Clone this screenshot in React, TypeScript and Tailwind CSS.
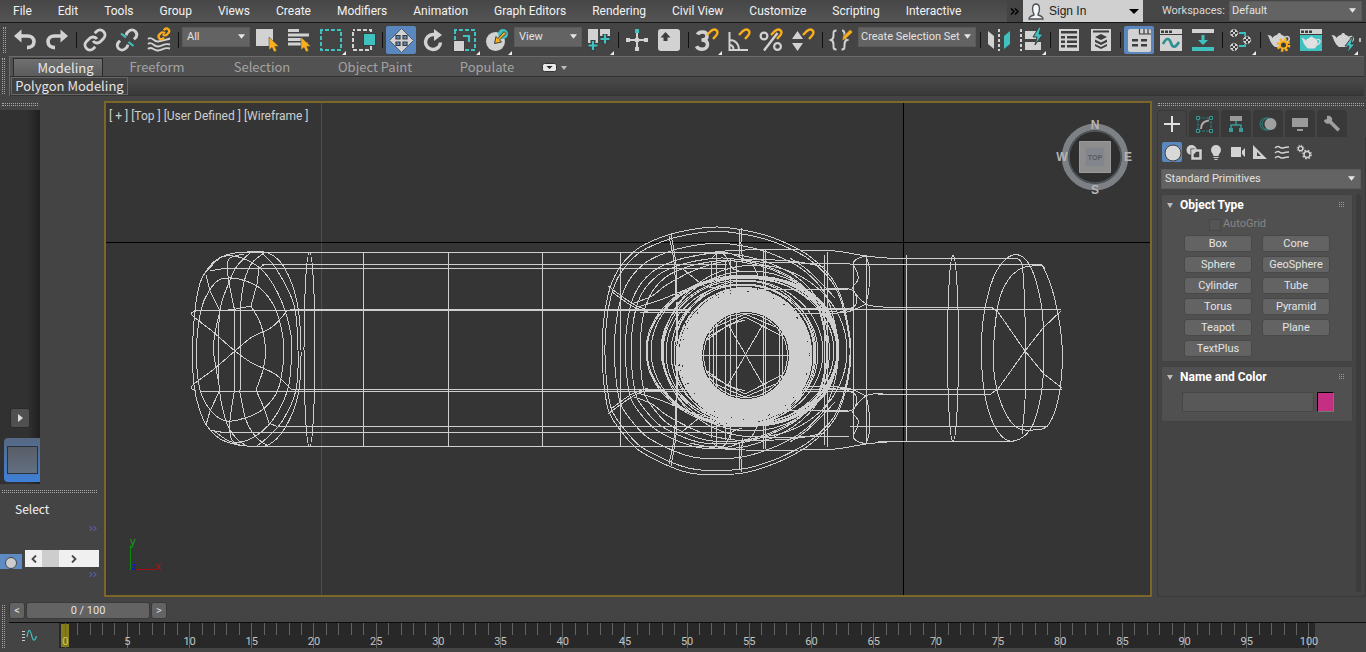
import { type ReactNode } from "react";

const G = "#d2d2d2";
const T = "#3fc1c0";
const O = "#fbaf1c";
const D = "#3c3c3c";

type Pt = [number, number];

function smooth(points: Pt[], closed = false): string {
  const n = points.length;
  const at = (i: number): Pt =>
    closed ? points[(i + n) % n] : points[Math.max(0, Math.min(n - 1, i))];
  let d = `M${points[0][0]} ${points[0][1]}`;
  const last = closed ? n : n - 1;
  for (let i = 0; i < last; i++) {
    const [p0, p1, p2, p3] = [at(i - 1), at(i), at(i + 1), at(i + 2)];
    const c1 = [p1[0] + (p2[0] - p0[0]) / 6, p1[1] + (p2[1] - p0[1]) / 6];
    const c2 = [p2[0] - (p3[0] - p1[0]) / 6, p2[1] - (p3[1] - p1[1]) / 6];
    d += `C${c1[0]} ${c1[1]} ${c2[0]} ${c2[1]} ${p2[0]} ${p2[1]}`;
  }
  return d + (closed ? "Z" : "");
}

/* ---------- toolbar ---------- */

function Tool({
  label,
  active = false,
  flyout = false,
  children,
}: {
  label: string;
  active?: boolean;
  flyout?: boolean;
  children: ReactNode;
}) {
  return (
    <button type="button" aria-label={label} className="flex w-8 shrink-0 justify-center">
      <svg viewBox="0 0 32 30" className="h-[30px] w-8" fill="none">
        {active && <rect x="1" y="1" width="30" height="28" rx="2" fill="#5b87bf" />}
        {children}
        {flyout && <path d="M31 26v4h-4z" fill="#eee" />}
      </svg>
    </button>
  );
}

function Sep() {
  return (
    <div className="flex w-[6px] shrink-0 justify-center">
      <div className="h-4 w-px bg-[#111]" />
    </div>
  );
}

function Combo({
  label,
  value,
  box,
  select,
  id,
}: {
  label: string;
  value: string;
  box: string;
  select: string;
  id?: string;
}) {
  return (
    <div className={"relative " + box}>
      <select
        id={id}
        aria-label={label}
        className={
          "block w-full appearance-none overflow-hidden text-clip whitespace-nowrap border border-[#5a5a5a] bg-[#636363] text-[11px] text-[#e2e2e2] outline-none " +
          select
        }
      >
        <option>{value}</option>
      </select>
      <svg viewBox="0 0 8 5" className="pointer-events-none absolute right-[6px] top-1/2 -mt-[3px] h-[5px] w-[7px]">
        <path d="M0 0h8L4 5z" fill="#e6e6e6" />
      </svg>
    </div>
  );
}

const magnet = <path d="M16 10 20 6C24 2.500 28.500 6 25.500 10L22 14" stroke={O} strokeWidth="2.400" />;
const cursor = <path d="M18 12v13l3-2.500 2 4.500 2.800-1.200-2-4.300H28z" fill={O} stroke={D} strokeWidth=".5" />;
const chainPath =
  "M10 13a5 5 0 0 0 7.54.54l3-3a5 5 0 0 0-7.070-7.070l-1.720 1.710M14 11a5 5 0 0 0-7.540-.540l-3 3a5 5 0 0 0 7.070 7.070l1.710-1.710";

function Teapot({ color = G }: { color?: string }) {
  return (
    <g>
      <path
        d="M4.500 10c3 0 4 1 5 3 .8-1.500 2-2.500 4-3l1-.5c0-2 3.500-2 3.500 0l1 .5c3 1 4.500 3 4.500 5.500 0 3-2 5-3.500 6.500h-8C10 20.500 8 18 7 15.500c-.7-2-1-3.500-2.500-5.500z"
        fill={color}
      />
      <path d="M22 12c5-2 6 3 1 6" stroke={color} strokeWidth="1.500" />
    </g>
  );
}

function WindowFrame({ body = G }: { body?: string }) {
  return (
    <g>
      <path d="M5 4h22v22H5z" fill={body} />
      <path d="M5 4h22v5H5z" fill={G} />
      <path d="M6 5.500h3v2.500H6zM10 5.500h3v2.500h-3zM14 5.500h3v2.500h-3zM5 9h22v1H5z" fill={D} />
    </g>
  );
}

function Checker({ x, y }: { x: number; y: number }) {
  return (
    <g>
      <circle cx={x} cy={y} r="3.700" fill={D} stroke={G} strokeWidth="1" strokeDasharray="1.900 1" />
      <path
        d={`M${x - 1} ${y - 1}h2v2h-2zM${x - 3} ${y - 3}h2v2h-2zM${x + 1} ${y - 3}h2v2h-2zM${x - 3} ${y + 1}h2v2h-2zM${x + 1} ${y + 1}h2v2h-2z`}
        fill={G}
      />
    </g>
  );
}

function Toolbar() {
  return (
    <div className="flex h-[33px] items-center overflow-hidden bg-[#444]">
      <div className="ml-[3px] mr-[3px] h-[26px] w-[3px] shrink-0 border-x border-dotted border-[#a4a4a4]" />
      <Tool label="Undo">
        <path d="M11 11h7.500c4 0 6.500 2.500 6.500 5.800s-2.500 5.800-7 5.800" stroke={G} strokeWidth="3.600" />
        <path d="M5 11l7.500-6.500v13z" fill={G} />
      </Tool>
      <Tool label="Redo">
        <path d="M21 11h-7.500C9.500 11 7 13.500 7 16.800s2.500 5.800 7 5.800" stroke={G} strokeWidth="3.600" />
        <path d="M27 11l-7.500-6.500v13z" fill={G} />
      </Tool>
      <Sep />
      <Tool label="Select and Link">
        <path d={chainPath} transform="translate(4 3)" stroke={G} strokeWidth="2.900" />
      </Tool>
      <Tool label="Unlink Selection">
        <g transform="translate(4 3)" stroke={G} strokeWidth="2.900">
          <path d="m18.840 11.250 1.720-1.500a5 5 0 0 0-.1-6.300 5 5 0 0 0-6.990 0l-1.720 1.710-.6 2.300" />
          <path d="m5.170 12.750-1.710 1.500a5 5 0 0 0 .1 6.300 5 5 0 0 0 6.970 0l1.710-1.710.6-2.300" />
        </g>
        <path d="M10 8.500l5 4M17.500 17l5 4" stroke={T} strokeWidth="2.200" />
      </Tool>
      <Tool label="Bind to Space Warp">
        <path
          d="M5 14c4-3.500 5.500 3 10 2.500s5-1 12-3M5 19c4-3.500 5.500 3 10 2.500s6-3.500 12-2M5 24c4-3.500 5.500 2 10 1.500s6-3.500 12-2"
          stroke={G}
          strokeWidth="1.900"
        />
        <path d={chainPath} transform="translate(14.500 2.500) scale(.53)" stroke={O} strokeWidth="4.200" />
      </Tool>
      <Sep />
      <Combo label="Selection filter" value="All" box="mb-[5px] w-[70px] shrink-0 px-px" select="h-5 pl-1" />
      <Tool label="Select Object">
        <path d="M5 4h17v17H5z" fill={G} />
        {cursor}
      </Tool>
      <Tool label="Select by Name">
        <path d="M5 4h11v3H5zM5 8.500h21v3H5zM5 13h13v3H5zM5 17.500h20v3H5z" fill={G} />
        {cursor}
      </Tool>
      <Tool label="Rectangular Selection Region" flyout>
        <rect x="6" y="5" width="20" height="20" stroke={T} strokeWidth="2" strokeDasharray="4 2" strokeDashoffset="2" />
      </Tool>
      <Tool label="Window Crossing">
        <rect x="6" y="5" width="18" height="20" stroke={G} strokeWidth="2" strokeDasharray="4 2" strokeDashoffset="2" />
        <path d="M16 8h13v13H16z" fill={D} />
        <path d="M17 9h11v11H17z" fill={T} />
      </Tool>
      <Sep />
      <Tool label="Select and Move" active>
        <path d="M16.500 3.500 28.500 15.500 16.500 27.500 4.500 15.500z" fill={G} stroke="#4a5a70" />
        <path
          d="M11 10.500h4v3.500h-4zM18 10.500h4v3.500h-4zM11 17h4v3.500h-4zM18 17h4v3.500h-4z"
          fill="#5b87bf"
          stroke={D}
          strokeWidth="1.200"
        />
      </Tool>
      <Tool label="Select and Rotate">
        <path d="M18 9.500h-2a7.500 7.500 0 1 0 7.500 8" stroke={G} strokeWidth="3.500" />
        <path d="M17 4l8 6-8 6z" fill={G} />
      </Tool>
      <Tool label="Select and Scale" flyout>
        <rect x="6" y="5" width="20" height="20" stroke={T} strokeWidth="2" strokeDasharray="4 2" strokeDashoffset="2" />
        <path d="M4 15h12v12H4z" fill={D} />
        <path d="M5 16h10v10H5z" fill={G} />
        <path d="M14 11h6v6" stroke={T} strokeWidth="2.200" />
      </Tool>
      <Tool label="Select and Place" flyout>
        <circle cx="14.500" cy="16.500" r="9.500" fill={G} />
        <circle cx="22" cy="9" r="5" fill={T} />
        <path d="M23 6.500l2 2-6.500 6.500 2 2-7 1.500 1.500-7 2 2z" fill={O} stroke={D} />
      </Tool>
      <Combo label="Reference coordinate system" value="View" box="mb-[5px] w-[70px] shrink-0 px-px" select="h-5 pl-1" />
      <Tool label="Use Pivot Point Center" flyout>
        <path d="M5 4h10v18H5zM17 4h10v12H17z" fill={G} />
        <path d="M10 15v11M5 20.500h10M22 9v10M17 13.500h10" stroke={D} strokeWidth="5" />
        <path d="M10 16v9M5.500 20.500h9M22 9.500v9M17.500 14h9" stroke={T} strokeWidth="2.200" />
      </Tool>
      <Sep />
      <Tool label="Select and Manipulate">
        <path d="M16 8v17M6 15h20" stroke={G} strokeWidth="2" />
        <path d="M5 13h4v4H5zM23 13h4v4h-4zM14 22h4v4h-4zM14 13h4v4h-4z" fill={G} />
        <path d="M14 4h4v4h-4z" fill={T} />
      </Tool>
      <Tool label="Keyboard Shortcut Override">
        <rect x="5" y="4" width="22" height="22" rx="3" fill={G} />
        <path d="M12.500 7l5 5.500h-3V16h-4v-3.500h-3z" fill={D} />
      </Tool>
      <Sep />
      <Tool label="Snaps Toggle" flyout>
        <path
          d="M6.500 9.500c1-2 3-2.500 5-2.500 3 0 4.500 1.700 4.500 4 0 2.500-2 4-5.500 4 4 0 6 1.700 6 4.500 0 3-2.300 4.700-5.500 4.700-2.500 0-4.500-1-5.500-3"
          stroke={G}
          strokeWidth="3.600"
        />
        {magnet}
      </Tool>
      <Tool label="Angle Snap Toggle">
        <path d="M6.500 7v18H25M6.500 15c6 0 9.500 4 9.500 9.500M6.500 20c2.500 0 4 2 4 4.500" stroke={G} strokeWidth="2" />
        {magnet}
      </Tool>
      <Tool label="Percent Snap Toggle">
        <circle cx="9" cy="11" r="3.400" stroke={G} strokeWidth="2.200" />
        <circle cx="22.500" cy="21.500" r="3.400" stroke={G} strokeWidth="2.200" />
        <path d="M22.500 8 9 25.500" stroke={G} strokeWidth="2.400" />
        {magnet}
      </Tool>
      <Tool label="Spinner Snap Toggle">
        <path d="M5 14l5.500-8 5.500 8zM5 18l5.500 8 5.500-8z" fill={G} />
        {magnet}
      </Tool>
      <Sep />
      <Tool label="Edit Named Selection Sets">
        <path
          d="M11.500 5.500c-3 0-3 1-3 4s0 4.500-2.500 5.500c2.500 1 2.500 2.500 2.500 5.500s0 4 3 4M17 5.500c2 0 2.500 1 2.500 4s0 4.500 2.500 5.500c-2.500 1-2.500 2.500-2.500 5.500s0 4-3 4"
          stroke={G}
          strokeWidth="2"
        />
        <path d="M17 16l1-4.500L25 4.500l3 2.500-7.500 7z" fill={O} stroke={D} strokeWidth=".6" />
      </Tool>
      <Combo
        label="Named selection sets"
        value="Create Selection Set"
        box="mb-[5px] w-[120px] shrink-0 px-px"
        select="h-5 pl-[2px]"
      />
      <Sep />
      <Tool label="Mirror">
        <path d="M5 6l6 5v13l-6-5z" fill={G} />
        <path d="M27 6l-6 5v13l6-5z" fill={T} />
        <path d="M16 4v22" stroke={G} strokeWidth="2" strokeDasharray="3 2" />
      </Tool>
      <Tool label="Align" flyout>
        <path d="M6 4v22" stroke={G} strokeWidth="2" strokeDasharray="3 2" />
        <path d="M10 6h14v8H10zM10 17h16v8H10z" fill={G} />
        <path d="M24 2l-6 10h4l-2 8 8-11h-4l2-7z" fill={T} stroke={D} />
      </Tool>
      <Sep />
      <Tool label="Toggle Scene Explorer">
        <path d="M6 4h20v22H6z" fill={G} />
        <path
          d="M8 6h16v2.500H8zM8 11h4v2.500H8zM14 11h10v2.500H14zM8 15.500h4V18H8zM14 15.500h10V18H14zM8 20h4v2.500H8zM14 20h10v2.500H14z"
          fill={D}
        />
      </Tool>
      <Tool label="Toggle Layer Explorer">
        <path d="M6 4h20v22H6z" fill={G} />
        <path d="M8 5.500h16v2H8z" fill={D} />
        <path
          d="M16 9l6 3-6 3-6-3zM10 14.500l6 3 6-3v2.500l-6 3-6-3zM10 19l6 3 6-3v2l-6 3-6-3z"
          fill={D}
        />
      </Tool>
      <Sep />
      <Tool label="Toggle Ribbon" active>
        <rect x="5" y="4" width="23" height="23" rx="2" fill={G} />
        <path d="M16.500 4v5H28M21 4v5M25 4v5" stroke={D} strokeWidth="1.200" />
        <path d="M9 14h6v2.500H9zM18 14h6v2.500h-6zM9 19h6v2.500H9zM18 19h6v2.500h-6z" fill={D} />
      </Tool>
      <Tool label="Curve Editor">
        <WindowFrame />
        <path d="M8 19c3-6 6-7 8-1s5 4 8-1" stroke="#2b8f92" strokeWidth="2.600" />
      </Tool>
      <Tool label="Schematic View">
        <path d="M5 4h22v4H5z" fill={G} />
        <path d="M5 22h22v4H5zM14.500 10h3v5H21l-5 5-5-5h3.500z" fill={T} />
      </Tool>
      <Sep />
      <Tool label="Material Editor" flyout>
        <path d="M14 8h6v3M14 21h6v-2" stroke={T} strokeWidth="1.800" />
        <Checker x={9} y={8} />
        <Checker x={9} y={22} />
        <Checker x={22} y={15} />
      </Tool>
      <Sep />
      <Tool label="Render Setup">
        <Teapot />
        <circle cx="20.500" cy="20" r="5.500" stroke={O} strokeWidth="2.800" strokeDasharray="2.300 2" />
        <circle cx="20.500" cy="20" r="3.500" fill={D} stroke={O} strokeWidth="2" />
      </Tool>
      <Tool label="Rendered Frame Window">
        <WindowFrame body={T} />
        <g transform="translate(2.500 4.500) scale(.86)">
          <Teapot color="#e0e0e0" />
        </g>
      </Tool>
      <Tool label="Render Production" flyout>
        <Teapot />
        <path d="M25 12l-7 9h4l-2 7 8-9h-4l2-7z" fill={T} stroke={D} />
      </Tool>
      <span className="h-1 w-[2px] bg-[#bbb]" />
    </div>
  );
}

/* ---------- menu bar and ribbon ---------- */

const menus = [
  "File", "Edit", "Tools", "Group", "Views", "Create", "Modifiers", "Animation",
  "Graph Editors", "Rendering", "Civil View", "Customize", "Scripting", "Interactive",
];

function MenuBar() {
  return (
    <header className="flex h-[23px] items-stretch border-b border-[#161616] bg-linear-to-b from-[#464646] to-[#545454]">
      <nav className="flex flex-1 items-center gap-[26px] pl-[13px] text-[12px] text-[#f2f2f2]">
        {menus.map((m) => (
          <button key={m} type="button" className="whitespace-nowrap">
            {m}
          </button>
        ))}
      </nav>
      <div className="flex w-4 shrink-0 items-center justify-center bg-[#444] pr-[2px]">
        <svg viewBox="0 0 9 7" className="h-[7px] w-[9px]" fill="none" stroke="#000" strokeWidth="1.500">
          <path d="M1 .5l3 3-3 3M5 .5l3 3-3 3" />
        </svg>
      </div>
      <button
        type="button"
        className="flex w-[120px] shrink-0 items-center bg-[#d0d0d0] pl-[5px] font-['Liberation_Sans',sans-serif] text-[12px] text-[#1d1d1d]"
      >
        <svg viewBox="0 0 16 17" className="mr-[5px] h-[17px] w-4">
          <path d="M1 16c0-2.500 2-3.200 5-4 .3-1-.5-1.500-1-3C4 5 4.500 1 8 1s4 4 3 8c-.5 1.500-1.300 2-1 3 3 .8 5 1.500 5 4z" fill="#f4f6f8" stroke="#4b5056" strokeWidth="1.300" />
        </svg>
        Sign In
        <svg viewBox="0 0 10 5" className="ml-auto mr-1 h-[5px] w-[10px]">
          <path d="M0 0h10L5 5z" fill="#000" />
        </svg>
      </button>
      <div className="flex w-[223px] shrink-0 items-center bg-[#474747] pl-[19px]">
        <label htmlFor="workspace" className="w-[67px] whitespace-nowrap text-[11px] text-[#d8d8d8]">
          Workspaces:
        </label>
        <Combo id="workspace" label="Workspaces:" value="Default" box="w-[133px]" select="h-5 pl-[2px]" />
      </div>
    </header>
  );
}

function Ribbon() {
  return (
    <section className="flex bg-[#444] font-['Noto_Sans_CJK_SC','Noto_Sans',sans-serif]">
      <div className="mx-[2px] my-[2px] w-[3px] shrink-0 border-x border-dotted border-[#a4a4a4]" />
      <div className="ml-[2px] mr-[2px] min-w-0 flex-1 border-l border-t border-[#6b6b6b]">
        <div className="flex h-5 items-end border-b border-[#303030] bg-[#525252] pl-[3px] text-[13px] text-[#a3a3a3]">
          <button
            type="button"
            className="h-[18px] w-[90px] border border-b-0 border-[#2a2a2a] bg-linear-to-b from-[#707070] to-[#5c5c5c] pl-[15px] leading-4 text-[#e6e6e6]"
          >
            Modeling
          </button>
          <button type="button" className="w-[108px] leading-[18px]">Freeform</button>
          <button type="button" className="w-[102px] leading-[18px]">Selection</button>
          <button type="button" className="w-[124px] leading-[18px]">Object Paint</button>
          <button type="button" className="w-[100px] leading-[18px]">Populate</button>
          <button type="button" aria-label="Minimize ribbon" className="mb-1 ml-[5px] flex items-center gap-1">
            <svg viewBox="0 0 15 9" className="h-[9px] w-[15px]">
              <rect x=".5" y=".5" width="14" height="8" rx="2" fill="#e8e8e8" stroke="#333" />
              <path d="M4.500 3h6l-3 3z" fill="#222" />
            </svg>
            <svg viewBox="0 0 6 4" className="h-1 w-[6px]">
              <path d="M0 0h6L3 4z" fill="#bbb" />
            </svg>
          </button>
        </div>
        <div className="flex h-[19px] border-b border-[#333] bg-linear-to-b from-[#4b4b4b] to-[#383838] pl-px">
          <button
            type="button"
            className="h-[18px] w-[117px] border border-[#686868] bg-[#404040] text-[13px] leading-4 text-[#e4e4e4]"
          >
            Polygon Modeling
          </button>
        </div>
      </div>
    </section>
  );
}

/* ---------- wireframe drawing ---------- */

const H = (y: number, x1: number, x2: number) => `M${x1} ${y}H${x2}`;
const V = (x: number, y1: number, y2: number) => `M${x} ${y1}V${y2}`;

const straight = [
  H(252.5, 247, 722), H(264.5, 262, 727), H(268.5, 224, 725), H(309.5, 290, 690), H(310.5, 195, 690),
  H(389.5, 291, 690), H(391.5, 200, 690), H(426.5, 278, 735), H(432.5, 220, 730), H(446.5, 250, 722),
  V(363.5, 252, 446), V(448.5, 252, 446), V(542.5, 252, 446), V(620.5, 252, 446),
  H(258.5, 893, 1018), H(264.5, 850, 1040), H(307.5, 883, 992), H(309.5, 800, 1061),
  H(389.5, 800, 1062), H(394.5, 878, 990), H(426.5, 850, 1048), H(441.5, 878, 1014),
  V(853.5, 264, 436), V(866.5, 255, 444), V(906.5, 255, 441),
  V(711.5, 262, 285), V(716.5, 252, 285), V(725.5, 260, 290), V(730.5, 258, 290), V(736.5, 262, 290),
  V(763.5, 249, 288), V(765.5, 249, 288), V(824.5, 255, 445), V(827.5, 252, 447),
  V(711.5, 415, 438), V(716.5, 415, 447), V(725.5, 415, 440), V(730.5, 415, 440),
  V(763.5, 415, 449), V(765.5, 415, 449), H(289.5, 763, 848), H(410.5, 763, 848),
  H(312.5, 640, 690), H(308.5, 770, 854), H(391.5, 770, 854),
].join("");

const outer: Pt[] = [
  [602, 350], [604, 318], [610, 288], [620, 267], [636, 250], [652, 241], [671, 234], [695, 229],
  [718, 227], [743, 230], [768, 236], [790, 245], [808, 255], [825, 270], [837, 287], [846, 315],
  [851, 350], [847, 385], [837, 415], [825, 431], [808, 446], [785, 459], [765, 467], [743, 473],
  [712, 475], [690, 473], [671, 467], [652, 458], [636, 448], [621, 431], [609, 412], [604, 385],
];

function scaled(kx: number, ky: number, dx: number): Pt[] {
  return outer.map(([x, y]) => [726 + dx + (x - 726) * kx, 351 + (y - 351) * ky]);
}

const shellCurves = [
  smooth(outer, true),
  smooth(scaled(0.985, 0.965, 1), true),
  smooth(scaled(0.9, 0.87, 0), true),
  smooth(scaled(0.82, 0.79, 1), true),
  smooth(scaled(0.79, 0.75, 3), true),
  smooth(scaled(0.75, 0.73, 7), true),
];

const leftCap = [
  smooth([
    [192.5, 350], [195, 310], [200, 283], [207, 270], [216, 260], [230, 254], [247, 252], [268, 253],
    [284, 267], [297, 302], [301, 350], [298, 395], [285, 428], [268, 445], [247, 446], [222, 440],
    [207, 426], [199, 408], [194, 385],
  ], true),
  smooth([
    [196.5, 350], [201, 310], [209, 291], [219, 280], [231, 278], [246, 281], [261, 289], [275, 308],
    [283, 338], [283, 365], [277, 392], [262, 410], [245, 418], [227, 421], [212, 412], [200, 390],
  ], true),
  smooth([[207, 271], [222, 257], [242, 258], [264, 272], [281, 300], [291, 335], [291, 365], [287, 392], [272, 421], [252, 438], [232, 442], [214, 431]]),
  smooth([[262, 253], [277, 270], [294, 305], [298, 350], [296, 390], [283, 420], [268, 437], [257, 446]]),
  smooth([[250, 253], [237, 266], [228, 285], [220, 310], [218.5, 350], [219.5, 390], [227, 424], [238, 440], [247, 446]]),
  smooth([[264, 253], [252, 263], [244, 282], [240, 310]]) + "V390" + smooth([[239.5, 390], [246, 420], [256, 437], [268, 446]]),
  smooth([[244, 254], [229, 259], [228, 276], [234.5, 310]]) + "V390" + smooth([[234.5, 390], [230, 420], [231, 438], [240, 446]]),
  "M278 264.500H264L259 269L257 284L251 306L236 309L220 311",
  smooth([[251, 306], [261, 325], [265.5, 350], [263, 370], [256, 390]]),
  "M256 390L264 408L269 423L277 426.500",
  "M206 275L210 291L220 311",
  smooth([[220, 311], [215, 333], [213.5, 350], [216, 368], [220, 390]]),
  "M220 390L210 411L206 425",
  smooth([[196, 311], [192, 315], [212, 331], [235, 351], [252, 363], [275, 374], [291, 389]]),
  smooth([[196, 391], [192, 386], [214, 369], [235, 351], [252, 337], [272, 327], [288, 310]]),
  smooth([[210, 271], [224, 268.5], [232, 268.5]]),
  smooth([[210, 430], [224, 432.5], [232, 432.5]]),
];

const rightCap = [
  smooth([[981.5, 345], [985, 308], [996, 272], [1013, 255], [1029, 264], [1041, 303], [1044, 350], [1041, 395], [1030, 430], [1010, 441], [994, 425], [984, 390]], true),
  smooth([[993.5, 350], [998, 305], [1008, 280], [1022, 268], [1037, 266], [1044, 269], [1055, 300], [1062, 345], [1060, 390], [1049, 424], [1033, 430], [1016, 427], [1003, 408], [995, 380]], true),
  smooth([[1016, 258], [1022, 265], [1024.5, 300], [1025.5, 350], [1025, 400], [1022, 434]]),
  "M992 307.500L998 312L1025 351L1044 374L1062 388",
  "M990 394.500L998 389L1025 351L1043 328L1061 311",
  "M1040 264l4 3v4",
];

const halfDetails = [
  smooth([[690, 257], [715, 252], [745, 250], [800, 250], [835, 251], [866, 256], [893, 258.5]]),
  smooth([[866, 256], [857, 259], [853, 264], [857, 272], [858, 280], [853, 289], [866, 304], [883, 307]]),
  smooth([[866, 257], [869, 266], [869, 288], [866, 304]]),
  smooth([[827, 289], [849, 289], [855, 293], [857, 302], [853, 307], [840, 312], [820, 310]]),
  smooth([[866, 304], [853, 310], [838, 313], [780, 313]]),
  smooth([[722, 252], [732, 254], [744, 259], [760, 262], [800, 263], [850, 264]]),
  smooth([[634, 303], [652, 296], [668, 284], [700, 268], [735, 260], [790, 261], [825, 267]]),
  smooth([[634, 308], [660, 300], [690, 288], [715, 281], [740, 276]]),
  smooth([[608, 286], [630, 302], [645, 309], [665, 310]]),
  smooth([[612, 292], [632, 306], [648, 312]]),
  smooth([[683, 269], [694, 278], [705, 286], [718, 288]]),
  smooth([[712, 258], [720, 252], [727, 258], [732, 268], [742, 272]]),
  smooth([[736, 259], [750, 262], [758, 275]]),
  smooth([[790, 258], [805, 268], [820, 282], [835, 298]]),
  smooth([[671, 234], [676, 265], [677, 300], [677, 350]]),
  smooth([[669, 236], [674, 262], [676, 300], [676, 350]]),
  smooth([[742, 228], [741, 244], [743, 262]]),
  smooth([[740, 230], [739, 246], [740, 258]]),
];

const middleLoops = [
  { cx: 740, cy: 351, rx: 94, ry: 75 }, { cx: 742, cy: 351, rx: 95, ry: 74 },
  { cx: 743, cy: 351, rx: 96, ry: 73 }, { cx: 744, cy: 351, rx: 93, ry: 76 },
  { cx: 750, cy: 350, rx: 89, ry: 73 }, { cx: 755, cy: 351, rx: 92, ry: 86 },
  { cx: 750, cy: 351, rx: 88, ry: 80 }, { cx: 743, cy: 352, rx: 80, ry: 72 },
  { cx: 742, cy: 353, rx: 76, ry: 69 }, { cx: 743, cy: 353, rx: 72, ry: 68 },
  { cx: 744, cy: 354, rx: 70, ry: 70 }, { cx: 745, cy: 353, rx: 71, ry: 72 },
];

const holeLines = [
  V(709.5, 330, 381), V(713.5, 325, 386), V(716.5, 323, 388), V(725.5, 317, 394), V(730.5, 315, 396),
  V(736.5, 313, 398), V(763.5, 315, 396), V(765.5, 316, 395), V(779.5, 327, 383), V(782.5, 332, 379),
  H(355.5, 702, 789), "M729 326l34 59M762 326l-34 59",
  "M709 336L745 317L782 336M713 328L745 314L778 328M707 340L728 325L745 320",
  "M709 375L745 394L782 375M713 383L745 397L778 383M707 371L728 386L745 391",
].join("");

function Wireframe() {
  return (
    <svg
      viewBox="106 103 1044 492"
      preserveAspectRatio="xMidYMid slice"
      className="absolute inset-0 size-full"
      fill="none"
      shapeRendering="crispEdges"
      role="img"
      aria-label="Top wireframe view"
    >
      <path d="M321.500 90V610" stroke="#4d4d4d" />
      <path d="M0 242.500H1400M903.500 90V610" stroke="#000" />
      <g stroke="#cfcfcf" strokeWidth="1">
        <path d={straight} />
        <ellipse cx="309.500" cy="349.500" rx="5.500" ry="97" />
        <ellipse cx="953" cy="348.500" rx="5.500" ry="93" />
        {[...shellCurves, ...leftCap, ...rightCap].map((d, i) => (
          <path key={i} d={d} />
        ))}
        {halfDetails.map((d, i) => (
          <path key={i} d={d} />
        ))}
        <g transform="translate(0 700) scale(1 -1)">
          {halfDetails.map((d, i) => (
            <path key={i} d={d} />
          ))}
        </g>
        {middleLoops.map((e, i) => (
          <ellipse key={i} {...e} />
        ))}
        <path d={smooth([[745, 277], [775, 279], [805, 290], [828, 312], [838, 350], [828, 388], [805, 411], [775, 423], [745, 425]])} strokeWidth="3" />
        <circle cx="745.500" cy="355.500" r="43.500" fill="#353535" stroke="none" />
        <path d={holeLines} />
        <circle cx="745.500" cy="355.500" r="42" />
        <circle cx="745.500" cy="355.500" r="55" strokeWidth="23" />
        <circle cx="744.500" cy="355" r="67" strokeWidth="2" strokeDasharray="27 1 42 1 14 1" />
      </g>
      <circle cx="745.500" cy="355.500" r="64" stroke="#353535" strokeDasharray="1 17 2 25 1 11" />
      <path d="M130.500 545v25" stroke="#0a8a0a" />
      <path d="M135 569.500h22" stroke="#a40d0d" />
      <g fontFamily="Noto Sans, sans-serif" fontSize="11" stroke="none">
        <text x="130" y="545" fill="#1c9a1c">y</text>
        <text x="155" y="570" fill="#b01010">x</text>
        <text x="131" y="570" fill="#1414d8">z</text>
      </g>
    </svg>
  );
}

function ViewCube() {
  return (
    <svg viewBox="0 0 80 80" className="absolute right-[15px] top-[14px] size-20" role="img" aria-label="View cube">
      <circle cx="40" cy="40" r="30" fill="#2e2e2e" stroke="#7d8186" strokeWidth="6.500" />
      <circle cx="40" cy="40" r="26" fill="none" stroke="#50555a" strokeWidth="1.500" />
      <path d="M24.500 24.500h31v31h-31z" fill="#8d8d8d" stroke="#9a9a9a" />
      <path d="M30.500 30.500h19v19h-19z" fill="#82868c" />
      <g fontFamily="Liberation Sans, sans-serif" textAnchor="middle" fontWeight="bold">
        <text x="40" y="43" fontSize="7" fill="#55595f">TOP</text>
        <g fontSize="12" fill="#b4b4b4">
          <text x="40" y="12">N</text>
          <text x="40" y="77">S</text>
          <text x="7" y="44">W</text>
          <text x="73" y="44">E</text>
        </g>
      </g>
    </svg>
  );
}

/* ---------- side panels ---------- */

function Grip({ className }: { className: string }) {
  return (
    <div className={"h-[3px] border-y border-dotted border-[#a8a8a8] " + className} />
  );
}

function LeftPanel() {
  return (
    <aside className="flex w-[104px] shrink-0 flex-col">
      <Grip className="ml-[2px] mt-[7px] w-9 shrink-0" />
      <div className="mt-1 flex w-10 flex-1 flex-col justify-end bg-linear-to-r from-[#313131] from-70% to-[#1f1f1f]">
        <button
          type="button"
          aria-label="Play"
          className="mb-[10px] ml-[10px] flex size-5 items-center justify-center rounded-[3px] border border-[#2a2a2a] bg-[#505050]"
        >
          <svg viewBox="0 0 5 8" className="h-2 w-[5px]">
            <path d="M0 0l5 4-5 4z" fill="#ddd" />
          </svg>
        </button>
        <button
          type="button"
          aria-label="Viewport layout"
          className="mb-[2px] ml-1 flex h-11 items-center rounded-l-[4px] bg-linear-to-b from-[#566781] to-[#3d80d8] pl-[3px]"
        >
          <span className="h-7 w-[31px] border border-[#2b3138] bg-linear-to-b from-[#585d66] to-[#627082]" />
        </button>
      </div>
      <Grip className="ml-[2px] mt-[6px] w-[95px] shrink-0" />
      <div className="mt-[7px] pl-[15px] font-['Noto_Sans_CJK_SC','Noto_Sans',sans-serif] text-[12px] leading-[18px] text-[#f4f4f4]">Select</div>
      <Chevrons className="mt-2" />
      <div className="mt-[19px] flex h-[19px] items-end">
        <button type="button" aria-label="Object selection" className="flex h-[15px] w-[22px] items-end justify-center overflow-hidden bg-[#5f8bc4]">
          <span className="size-3 rounded-full border border-[#444] bg-[#ccc]" />
        </button>
        <div className="ml-[3px] flex h-[17px] w-[74px] items-stretch self-start bg-[#f0f0f0]">
          <button type="button" aria-label="Scroll left" className="flex w-[17px] items-center justify-center">
            <svg viewBox="0 0 6 8" className="h-2 w-[6px]" fill="none" stroke="#444" strokeWidth="1.800"><path d="M5 0.500L1.500 4 5 7.500" /></svg>
          </button>
          <span className="w-[17px] bg-[#cdcdcd]" />
          <button type="button" aria-label="Scroll right" className="flex w-[29px] items-center justify-center">
            <svg viewBox="0 0 6 8" className="h-2 w-[6px]" fill="none" stroke="#444" strokeWidth="1.800"><path d="M1 0.500L4.500 4 1 7.500" /></svg>
          </button>
        </div>
      </div>
      <Chevrons className="mb-6 mt-[3px]" />
    </aside>
  );
}

function Chevrons({ className }: { className: string }) {
  return (
    <button type="button" aria-label="More" className={"ml-[89px] w-2 " + className}>
      <svg viewBox="0 0 8 5" className="h-[5px] w-2" fill="none" stroke="#5658a0" strokeWidth="1.200">
        <path d="M.5 0L3 2.500.5 5M4.500 0L7 2.500 4.500 5" />
      </svg>
    </button>
  );
}

const primitives = [
  "Box", "Cone", "Sphere", "GeoSphere", "Cylinder", "Tube", "Torus", "Pyramid", "Teapot", "Plane", "TextPlus",
];

const tabIcons: { name: string; art: ReactNode }[] = [
  { name: "Create", art: <path d="M10 2v16M2 10h16" stroke="#e0e0e0" strokeWidth="2" /> },
  {
    name: "Modify",
    art: (
      <g>
        <rect x="4" y="4" width="13" height="13" stroke="#2d7a7a" strokeWidth="1.200" strokeDasharray="3 1" />
        <path d="M2.500 2.500h3v3h-3zM15.500 2.500h3v3h-3zM2.500 15.500h3v3h-3zM15.500 15.500h3v3h-3z" fill="#333" stroke="#3a9a98" />
        <path d="M7 15c0-5 3-8 8-8.500" stroke="#aaa" strokeWidth="2" />
      </g>
    ),
  },
  {
    name: "Hierarchy",
    art: (
      <g>
        <path d="M4 2h12v5H4z" fill="#9a9a9a" />
        <path d="M10 7v4M5 16v-5h10v5" stroke="#3a9a98" strokeWidth="1.500" />
        <path d="M3 14h4v4H3zM13 14h4v4h-4z" fill="#3a9a98" />
      </g>
    ),
  },
  {
    name: "Motion",
    art: (
      <g>
        <circle cx="8" cy="10" r="6" stroke="#2f8381" />
        <circle cx="10" cy="10" r="6" stroke="#2f8381" fill="#3a3a3a" />
        <circle cx="12.500" cy="10" r="6" fill="#a0a0a0" />
      </g>
    ),
  },
  { name: "Display", art: <path d="M2 4h16v9H2zM7 15h6v2H7z" fill="#9a9a9a" /> },
  {
    name: "Utilities",
    art: (
      <path d="M2 6l3-1V2c3-.8 6 1.500 5 5l8 8-2.500 2.500-8-8C5 10.500 2 9 2 6z" fill="#a0a0a0" />
    ),
  },
];

const createIcons: { name: string; art: ReactNode }[] = [
  { name: "Geometry", art: <circle cx="11" cy="11" r="8" fill="#d8d8d8" stroke="#404040" /> },
  {
    name: "Shapes",
    art: (
      <g>
        <circle cx="7.500" cy="8" r="5" fill={G} />
        <path d="M8.500 8.500h8v8h-8z" stroke={D} strokeWidth="4" />
        <path d="M8.500 8.500h8v8h-8z" stroke={G} strokeWidth="2.500" />
        <path d="M12 5a5 5 0 0 1-3 7V9z" fill={G} />
      </g>
    ),
  },
  { name: "Lights", art: <path d="M10 3a5 5 0 0 1 5 5c0 2.500-2 3.500-2.500 6h-5C7 11.500 5 10.500 5 8a5 5 0 0 1 5-5zM7.500 15h5v1h-5zM8.500 17h3v1h-3z" fill={G} /> },
  { name: "Cameras", art: <path d="M3 5h10v10H3zM14 9l3-3v9l-3-3z" fill={G} /> },
  { name: "Helpers", art: <path d="M3 3l14 14H3zM7 10v4h4z" fillRule="evenodd" fill={G} /> },
  {
    name: "Space Warps",
    art: <path d="M3 6c4-4 5 1 8 0s4-1 6-1M3 11c4-4 5 1 8 0s4-1 6-1M3 16c4-4 5 1 8 0s4-1 6-1" stroke={G} strokeWidth="1.500" />,
  },
  {
    name: "Systems",
    art: (
      <g stroke={G}>
        <circle cx="6.500" cy="6.500" r="2.200" strokeWidth="1.300" />
        <circle cx="6.500" cy="6.500" r="3.300" strokeWidth="1" strokeDasharray="1.300 1.300" />
        <circle cx="13" cy="12.500" r="3" strokeWidth="1.500" />
        <circle cx="13" cy="12.500" r="4.300" strokeWidth="1.200" strokeDasharray="1.700 1.700" />
      </g>
    ),
  },
];

function Rollout({ title, children }: { title: string; children: ReactNode }) {
  return (
    <section className="rounded-[2px] border border-[#424242] bg-[#505050]">
      <h2 className="flex h-5 items-center pl-[5px] pr-[7px] text-[12px] font-bold text-white">
        <svg viewBox="0 0 6 5" className="mr-[7px] h-[5px] w-[6px]">
          <path d="M0 0h6L3 5z" fill="#bbb" />
        </svg>
        {title}
        <svg viewBox="0 0 6 6" className="ml-auto size-[6px]">
          <path d="M0 0h1v1H0zM2 0h1v1H2zM4 0h1v1H4zM0 2h1v1H0zM2 2h1v1H2zM4 2h1v1H4zM0 4h1v1H0zM2 4h1v1H2zM4 4h1v1H4z" fill="#999" />
        </svg>
      </h2>
      {children}
    </section>
  );
}

function CommandPanel() {
  return (
    <aside className="mb-1 flex w-[214px] shrink-0 flex-col pl-[5px]">
      <Grip className="ml-px mt-[7px] w-[206px] shrink-0" />
      <div className="mt-1 flex h-[27px] shrink-0 gap-[2px]">
        {tabIcons.map((t, i) => (
          <button
            key={t.name}
            type="button"
            aria-label={t.name}
            className={
              "flex w-[30px] items-center justify-center rounded-t-[4px] " +
              (i === 0 ? "border border-b-0 border-[#393939] bg-[#444]" : "bg-[#393939]")
            }
          >
            <svg viewBox="0 0 20 20" className="size-5" fill="none">
              {t.art}
            </svg>
          </button>
        ))}
      </div>
      <div className="flex flex-1 flex-col rounded-b-[3px] border border-t-0 border-[#393939] pl-1 pr-1 pt-[5px]">
        <div className="flex gap-[2px]">
          {createIcons.map((c, i) => (
            <button
              key={c.name}
              type="button"
              aria-label={c.name}
              className={"flex size-5 items-center justify-center rounded-[2px] " + (i === 0 ? "bg-[#5b87bf]" : "")}
            >
              <svg viewBox="0 0 20 20" className="size-5" fill="none">
                {c.art}
              </svg>
            </button>
          ))}
        </div>
        <Combo label="Category" value="Standard Primitives" box="-ml-px mt-[7px]" select="h-5 pl-[3px]" />
        <div className="-ml-px mt-[5px] flex flex-1 gap-[3px]">
          <div className="flex min-w-0 flex-1 flex-col gap-1">
            <Rollout title="Object Type">
              <label className="flex h-[19px] items-center gap-[2px] pl-[47px] text-[11px] text-[#868686]">
                <input type="checkbox" disabled className="size-3 appearance-none border border-[#484848] bg-[#555]" />
                AutoGrid
              </label>
              <div className="grid grid-cols-2 gap-x-[10px] gap-y-1 px-[22px] pb-1 pt-px">
                {primitives.map((p) => (
                  <button
                    key={p}
                    type="button"
                    className="h-[17px] rounded-[3px] border border-[#484848] bg-[#636363] text-center text-[11px] leading-[15px] text-[#e4e4e4]"
                  >
                    {p}
                  </button>
                ))}
              </div>
            </Rollout>
            <Rollout title="Name and Color">
              <div className="flex h-[34px] items-start gap-[3px] pl-5 pr-[18px] pt-[5px]">
                <input aria-label="Name" className="h-5 min-w-0 flex-1 border border-[#464646] bg-[#585858] px-1 text-[11px]" />
                <button type="button" aria-label="Object color" className="h-5 w-[17px] border border-[#777] border-l-black border-t-black bg-[#c52f83]" />
              </div>
            </Rollout>
          </div>
          <div className="mb-1 w-[5px] rounded-[3px] bg-[#3c3c3c]" />
        </div>
      </div>
    </aside>
  );
}

/* ---------- timeline ---------- */

function Timeline() {
  return (
    <footer className="flex shrink-0">
      <div className="mb-1 ml-[2px] mr-1 mt-1 w-[3px] shrink-0 border-x border-dotted border-[#a4a4a4]" />
      <div className="min-w-0 flex-1">
        <div className="flex h-[21px] items-start gap-px pt-px">
          <button type="button" aria-label="Previous frame" className="h-[17px] w-4 rounded-[3px] border border-[#3a3a3a] bg-[#636363] text-[11px] leading-[14px] text-[#ddd]">&lt;</button>
          <button type="button" className="h-[17px] w-[124px] rounded-[3px] border border-[#3a3a3a] bg-[#636363] text-[11px] leading-[15px] text-[#e2e2e2]">0 / 100</button>
          <button type="button" aria-label="Next frame" className="h-[17px] w-4 rounded-[3px] border border-[#3a3a3a] bg-[#636363] text-[11px] leading-[14px] text-[#ddd]">&gt;</button>
        </div>
        <div className="flex h-[26px] border-t border-[#0c0c0c]">
          <button type="button" aria-label="Open mini curve editor" className="flex w-[50px] shrink-0 items-center pl-[13px]">
            <svg viewBox="0 0 16 12" className="h-3 w-4" fill="none">
              <path d="M0 1.500h3M0 4.500h3M0 7.500h3M0 10.500h3" stroke="#ccc" />
              <path d="M5 7C6.500-2 8-1 9.500 5s3 7 5 1" stroke={T} strokeWidth="1.200" />
            </svg>
          </button>
          <div className="flex flex-1 bg-[#282828]">
            {Array.from({ length: 101 }, (_, i) => (
              <div key={i} className="relative flex w-0 flex-1 flex-col items-center">
                {i === 0 && <div className="absolute inset-y-px w-2 bg-[#857d1c]" />}
                <div className={i % 5 === 0 ? "z-0 h-full w-px bg-[#636363]" : "h-3 w-px bg-[#636363]"} />
                {i % 5 === 0 && (
                  <span className={"absolute bottom-0 text-[11px] leading-[13px] " + (i === 0 ? "text-[#cdc659]" : "text-[#c4c4c4]")}>
                    {i}
                  </span>
                )}
              </div>
            ))}
          </div>
          <div className="w-[51px] shrink-0" />
        </div>
        <div className="h-1" />
      </div>
    </footer>
  );
}

export default function App() {
  return (
    <div className="flex min-h-screen flex-col overflow-hidden bg-[#444] font-['Roboto','Noto_Sans',sans-serif]">
      <MenuBar />
      <Toolbar />
      <Ribbon />
      <main className="flex flex-1 items-stretch">
        <LeftPanel />
        <div className="mb-1 mt-[5px] flex flex-1">
          <div className="relative min-w-0 flex-1 overflow-hidden border-2 border-[#7c6728] bg-[#353535]">
            <Wireframe />
            <div className="absolute left-[3px] top-1 flex gap-[3px] text-[12px] text-[#cfcfcf]">
              <button type="button">[ + ]</button>
              <button type="button">[Top ]</button>
              <button type="button">[User Defined ]</button>
              <button type="button">[Wireframe ]</button>
            </div>
            <ViewCube />
          </div>
        </div>
        <CommandPanel />
      </main>
      <Timeline />
    </div>
  );
}
